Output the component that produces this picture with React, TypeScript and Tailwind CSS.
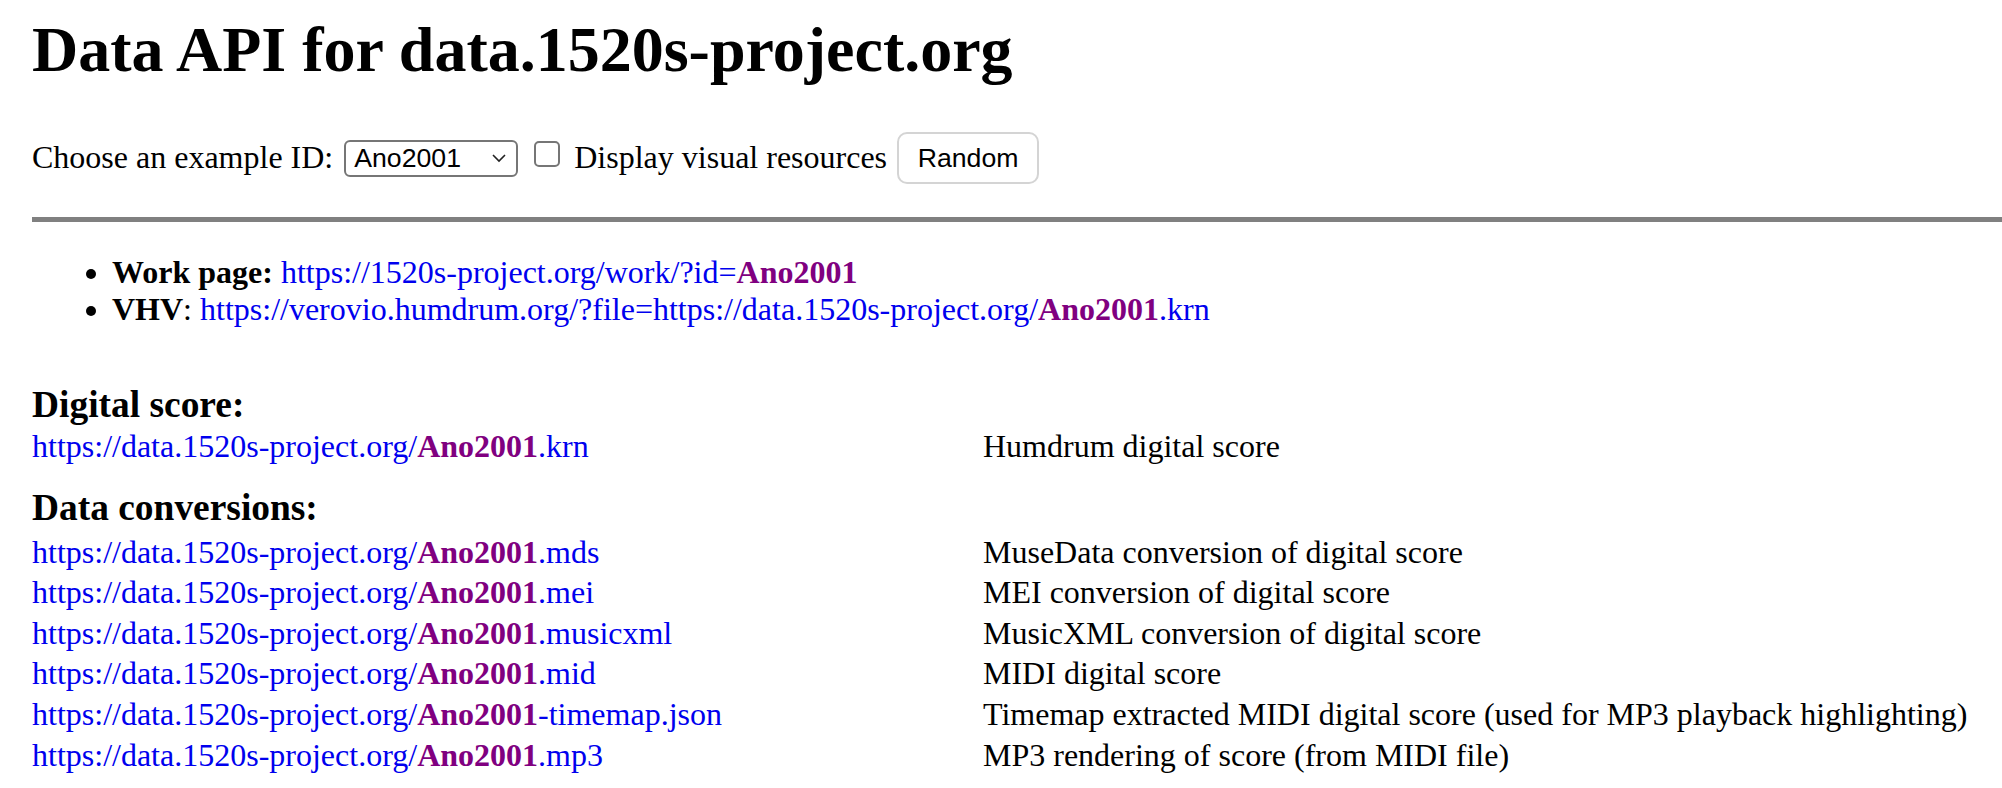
import React from 'react';

const ID = 'Ano2001';

const conversions = [
  { ext: '.mds', desc: 'MuseData conversion of digital score' },
  { ext: '.mei', desc: 'MEI conversion of digital score' },
  { ext: '.musicxml', desc: 'MusicXML conversion of digital score' },
  { ext: '.mid', desc: 'MIDI digital score' },
  { ext: '-timemap.json', desc: 'Timemap extracted MIDI digital score (used for MP3 playback highlighting)' },
  { ext: '.mp3', desc: 'MP3 rendering of score (from MIDI file)' },
];

function IdLink({ prefix, suffix = '' }: { prefix: string; suffix?: string }) {
  return (
    <a href="#" className="text-[#0000ee]">
      {prefix}
      <span className="font-bold text-[#800080]">{ID}</span>
      {suffix}
    </a>
  );
}

function Row({ ext, desc }: { ext: string; desc: string }) {
  return (
    <div className="grid grid-cols-[951px_1fr] leading-[40.6px]">
      <div>
        <IdLink prefix="https://data.1520s-project.org/" suffix={ext} />
      </div>
      <div>{desc}</div>
    </div>
  );
}

export default function App() {
  return (
    <div
      className="min-h-screen bg-white pl-[32px] text-[32px] text-black"
      style={{ fontFamily: '"Liberation Serif", "Times New Roman", serif' }}
    >
      <h1 className="pt-[13px] text-[64px] font-bold leading-[74px]">Data API for data.1520s-project.org</h1>

      {/* 控件行 */}
      <div className="mt-[45px] flex h-[52px] items-center">
        <span className="pb-[1px] leading-[37px]">Choose an example ID:</span>
        <div
          className="ml-[11px] flex h-[37px] w-[174px] items-center justify-between rounded-[6px] border-2 border-[#767676] pl-[8px] pr-[10px] text-[26.67px]"
          style={{ fontFamily: '"Liberation Sans", Arial, sans-serif' }}
        >
          <span>{ID}</span>
          <svg width="14" height="9" viewBox="0 0 14 9" fill="none">
            <polyline points="1,1 7,7 13,1" stroke="#222" strokeWidth="1.6" />
          </svg>
        </div>
        <div className="mb-[8px] ml-[16px] h-[26px] w-[26px] rounded-[5px] border-2 border-[#767676] bg-white"></div>
        <span className="ml-[14px] pb-[1px] leading-[37px]">Display visual resources</span>
        <button
          className="ml-[10px] flex h-[52px] w-[142px] items-center justify-center rounded-[10px] border-2 border-[#d4d4d4] bg-white text-[26.67px]"
          style={{ fontFamily: '"Liberation Sans", Arial, sans-serif' }}
        >
          Random
        </button>
      </div>

      <div className="mt-[33px] h-[5px] bg-[#808080]"></div>

      <ul className="mt-[32px] list-disc pl-[80px] leading-[37px]">
        <li>
          <b>Work page:</b> <IdLink prefix="https://1520s-project.org/work/?id=" />
        </li>
        <li>
          <b>VHV</b>: <IdLink prefix="https://verovio.humdrum.org/?file=https://data.1520s-project.org/" suffix=".krn" />
        </li>
      </ul>

      <h3 className="mt-[55px] text-[37.44px] font-bold leading-[43px]">Digital score:</h3>
      <Row ext=".krn" desc="Humdrum digital score" />

      <h3 className="mt-[19px] text-[37.44px] font-bold leading-[43px]">Data conversions:</h3>
      <div className="mt-[3px]">
        {conversions.map((c) => (
          <Row key={c.ext} ext={c.ext} desc={c.desc} />
        ))}
      </div>
    </div>
  );
}
